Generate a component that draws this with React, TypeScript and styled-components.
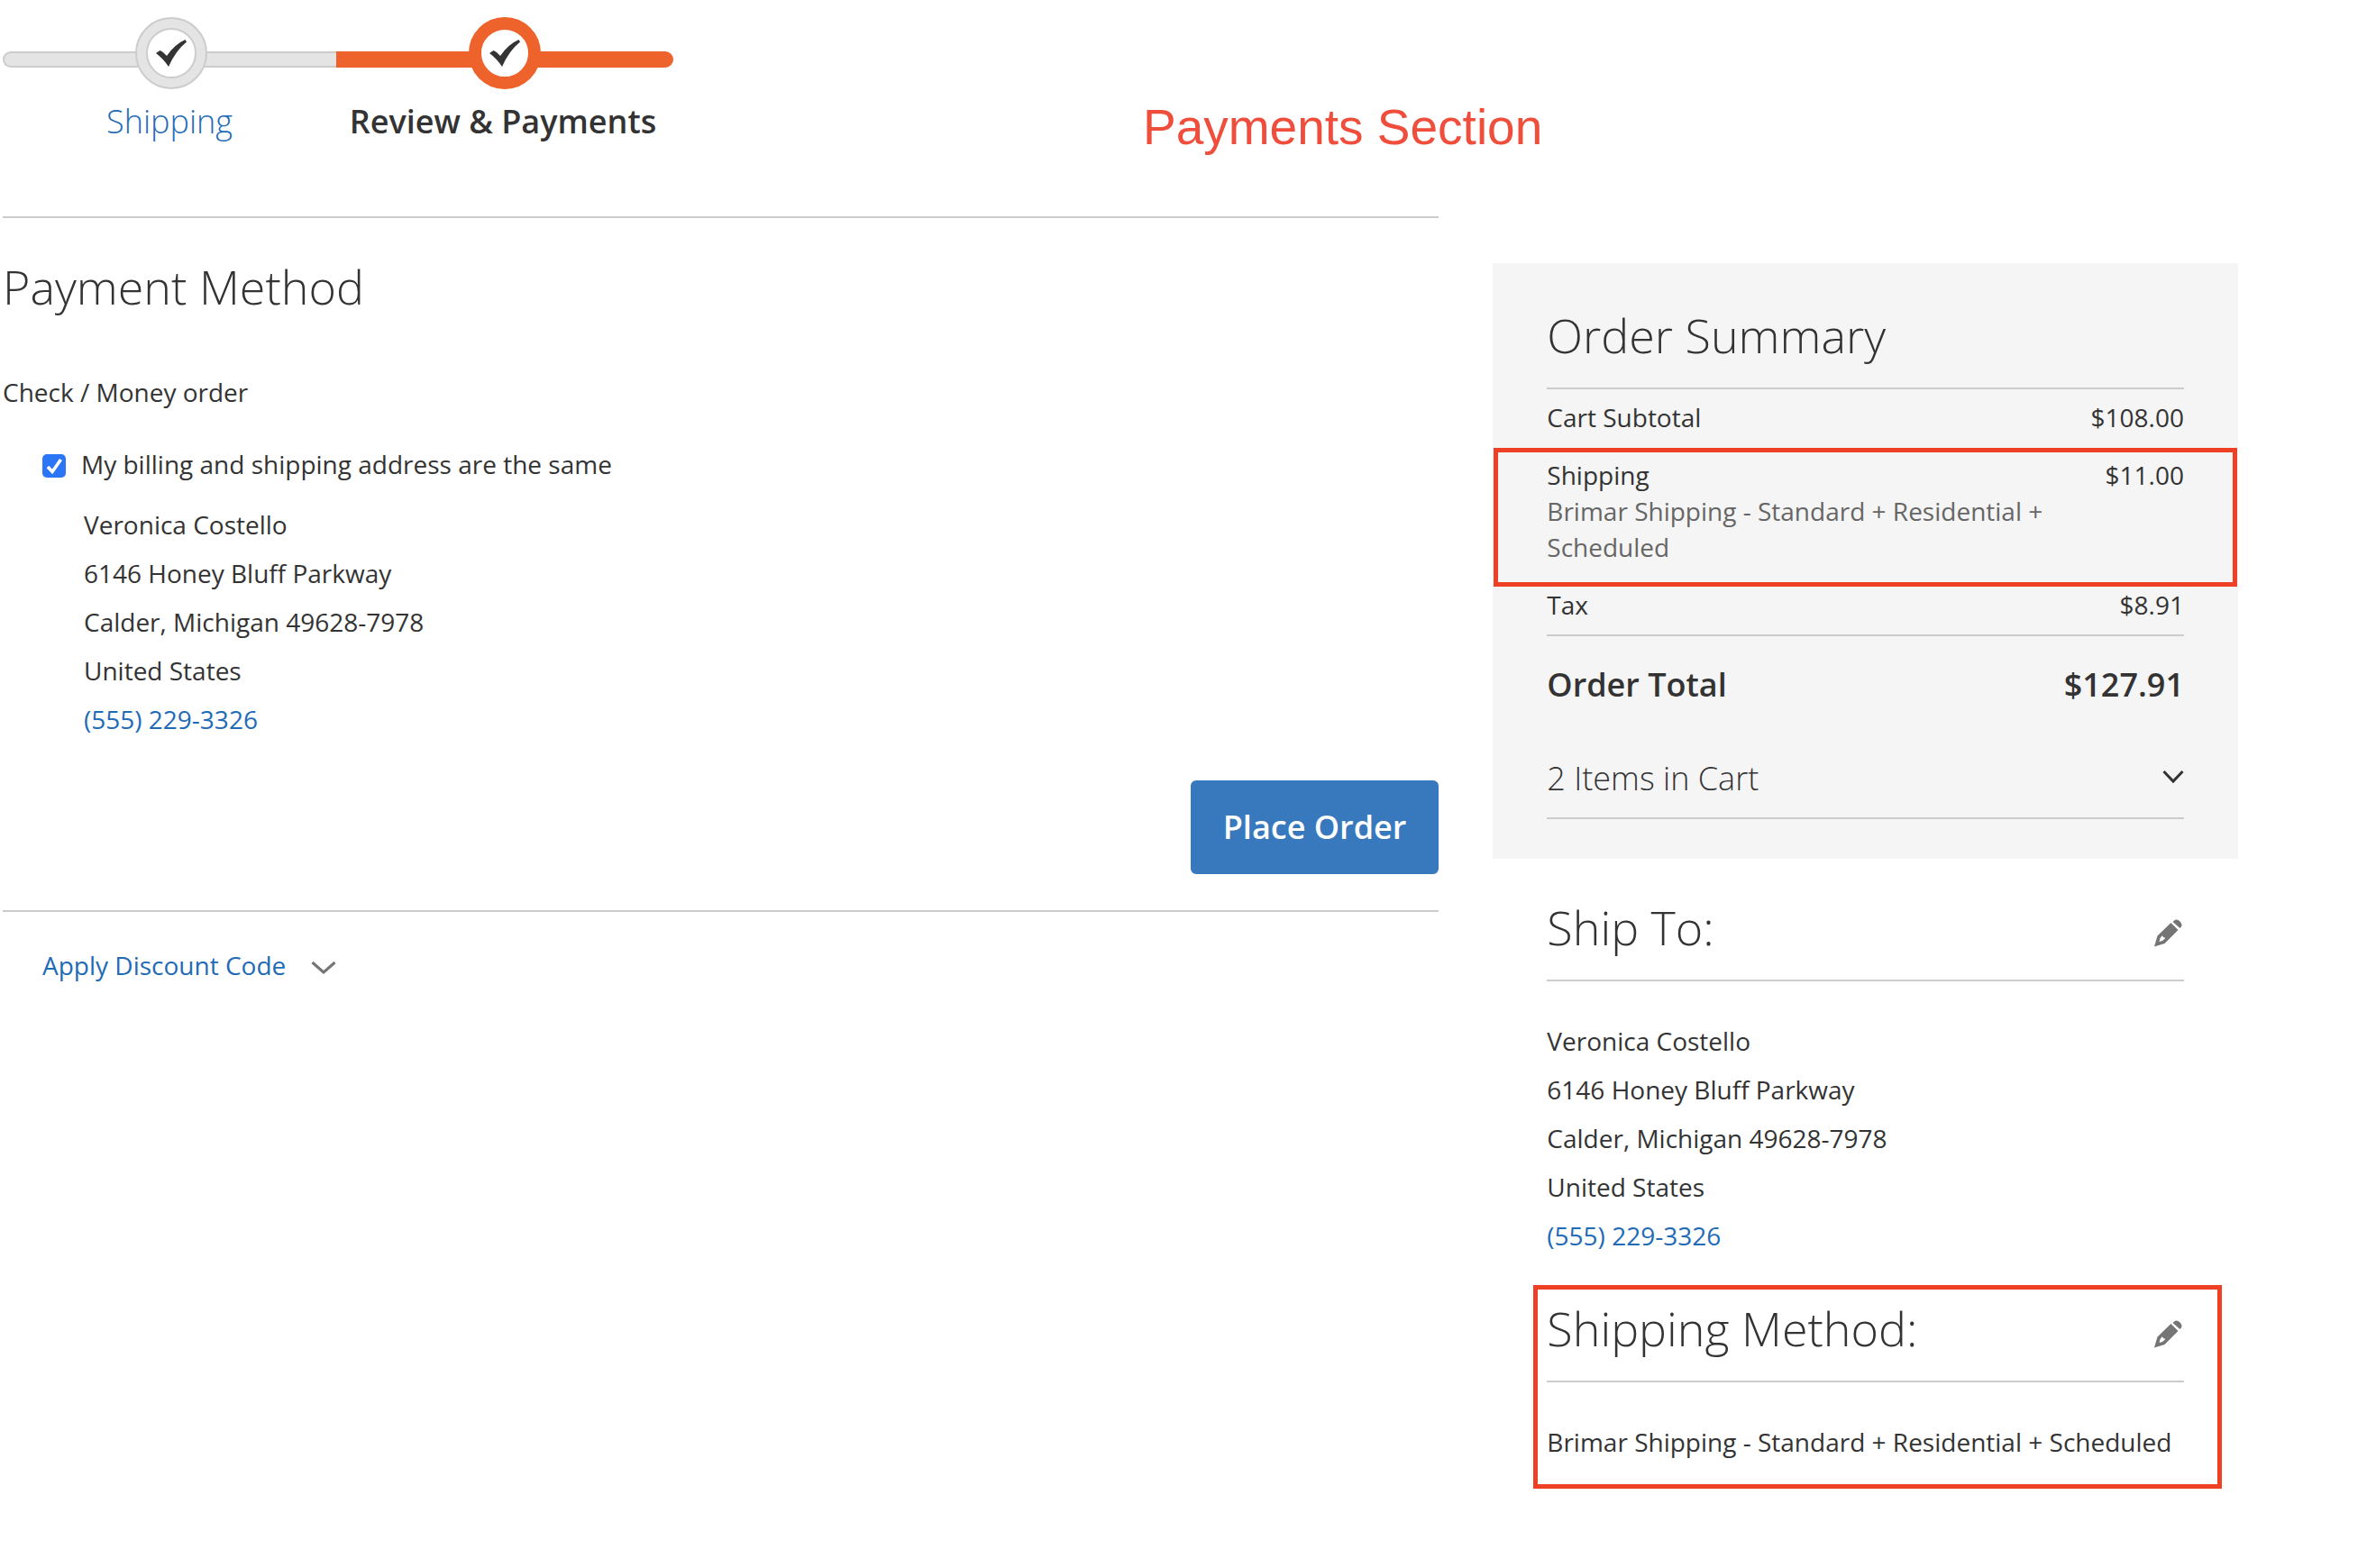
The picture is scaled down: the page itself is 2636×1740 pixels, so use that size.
import React from "react";
import styled, { createGlobalStyle } from "styled-components";

const text = "#333333";
const line = "#cccccc";
const link = "#1f6bb6";
const mark = "#ee4025";

const GlobalStyle = createGlobalStyle`
  *, *::before, *::after { box-sizing: border-box; }
  body {
    margin: 0;
    background: #ffffff;
    color: ${text};
    font-family: "Open Sans", "Noto Sans", sans-serif;
    font-size: 28px;
    line-height: 40px;
  }
  a { color: ${link}; text-decoration: none; }
`;

const Page = styled.div`
  padding: 0 153px 80px 3px;
`;

const Header = styled.header`
  display: flex;
  align-items: flex-start;
  height: 240px;
  padding-top: 19px;
`;

const Progress = styled.ol`
  display: flex;
  flex: none;
  margin: 0;
  padding: 0;
  list-style: none;
`;

const Step = styled.li<{ $active?: boolean }>`
  display: flex;
  flex-direction: column;
  align-items: center;
  position: relative;
  width: 370px;
  color: ${text};
  font-size: 36px;
  font-weight: ${(p) => (p.$active ? 600 : 300)};
  line-height: 50px;

  &::before {
    content: "";
    position: absolute;
    top: 38px;
    left: 0;
    right: ${(p) => (p.$active ? "-4px" : "0")};
    height: 18px;
    background: ${(p) => (p.$active ? "#ee622b" : "#e4e4e4")};
    border: 2px solid ${(p) => (p.$active ? "#ee622b" : line)};
    border-radius: ${(p) => (p.$active ? "0 10px 10px 0" : "10px 0 0 10px")};
    ${(p) => (p.$active ? "" : "border-right: 0;")}
  }
`;

const Dot = styled.span<{ $active?: boolean }>`
  display: grid;
  place-items: center;
  position: relative;
  width: 80px;
  height: 80px;
  margin: 0 0 11px 4px;
  border: 2px solid ${(p) => (p.$active ? "#ee622b" : line)};
  border-radius: 50%;
  background: ${(p) => (p.$active ? "#ee622b" : "#e4e4e4")};
`;

const DotCore = styled.span<{ $active?: boolean }>`
  display: grid;
  place-items: center;
  width: 56px;
  height: 56px;
  border: 2px solid ${(p) => (p.$active ? "#ee622b" : line)};
  border-radius: 50%;
  background: #ffffff;
`;

const Note = styled.p`
  margin: 90px 0 0 525px;
  color: #ef4e3c;
  font-family: "Liberation Sans", Arial, sans-serif;
  font-size: 55px;
  line-height: 64px;
  white-space: nowrap;
`;

const Columns = styled.div`
  display: grid;
  grid-template-columns: minmax(0, 2fr) minmax(0, 1fr);
  align-items: start;
`;

const Main = styled.main`
  margin-right: 60px;
  border-top: 2px solid ${line};
  padding-top: 48px;
`;

const Title = styled.h2`
  margin: 0;
  font-size: 52px;
  font-weight: 300;
  line-height: 56px;
`;

const MethodName = styled.p`
  margin: 69px 0 40px;
`;

const SameAddress = styled.label`
  display: flex;
  align-items: center;
  gap: 17px;
  padding-left: 44px;
`;

const Checkbox = styled.input`
  appearance: none;
  width: 26px;
  height: 26px;
  margin: 4px 0 0;
  border-radius: 5px;
  background: #ffffff;
  border: 2px solid #767676;

  &:checked {
    border: 0;
    background: #2b76f6
      url("data:image/svg+xml,%3Csvg xmlns='http://www.w3.org/2000/svg' viewBox='0 0 26 26'%3E%3Cpath d='M6 14l5 5.500L20.500 6' fill='none' stroke='white' stroke-width='3.600'/%3E%3C/svg%3E");
  }
`;

const Address = styled.address<{ $billing?: boolean }>`
  margin: ${(p) => (p.$billing ? "20px 0 41px" : "39px 0 0")};
  padding-left: ${(p) => (p.$billing ? 90 : 0)}px;
  font-style: normal;
  line-height: 54px;
`;

const Actions = styled.div`
  display: flex;
  justify-content: flex-end;
  padding-bottom: 40px;
  border-bottom: 2px solid ${line};
`;

const PlaceOrder = styled.button`
  padding: 28px 34px;
  border: 2px solid #3879bd;
  border-radius: 6px;
  background: #3879bd;
  color: #ffffff;
  font: 600 36px/44px "Open Sans", "Noto Sans", sans-serif;
`;

const Toggle = styled.button`
  display: flex;
  align-items: center;
  margin: 0;
  border: 0;
  background: none;
  font-family: inherit;
  text-align: left;
`;

const DiscountToggle = styled(Toggle)`
  gap: 28px;
  padding: 39px 0 0 44px;
  color: ${link};
  font-size: 28px;
  line-height: 40px;

  svg { margin-top: 6px; }
`;

const CartToggle = styled(Toggle)`
  justify-content: space-between;
  width: 100%;
  margin-top: 54px;
  padding: 0 0 18px;
  border-bottom: 2px solid ${line};
  color: ${text};
  font-size: 36px;
  font-weight: 300;
  line-height: 50px;

  svg { margin-bottom: 4px; }
`;

const Sidebar = styled.aside`
  padding-top: 52px;
`;

const Summary = styled.section`
  padding: 52px 60px 44px;
  background: #f5f5f5;
`;

const TitleRow = styled.div`
  display: flex;
  align-items: center;
  justify-content: space-between;
  padding-bottom: 30px;
  border-bottom: 2px solid ${line};
`;

const Totals = styled.table`
  width: 100%;
  border-collapse: collapse;
`;

const highlight = `
  content: "";
  position: absolute;
  border: 5px solid ${mark};
  pointer-events: none;
`;

const TotalRow = styled.tr<{ $marked?: boolean }>`
  position: relative;

  ${(p) =>
    p.$marked ? `&::after { ${highlight} top: 1px; bottom: -11px; left: -59px; right: -59px; }` : ""}

  th, td {
    padding: 11px 0 13px;
    font-weight: 400;
    text-align: left;
    vertical-align: top;
  }
  td {
    text-align: right;
    white-space: nowrap;
  }
`;

const GrandRow = styled.tr`
  border-top: 2px solid ${line};

  th, td {
    padding: 29px 0 0;
    font-size: 36px;
    font-weight: 600;
    line-height: 50px;
    text-align: left;
  }
  td { text-align: right; }
`;

const Carrier = styled.span`
  display: block;
  color: #666666;
`;

const ShipSection = styled.section<{ $marked?: boolean }>`
  position: relative;
  margin: 48px 60px 0;

  ${(p) =>
    p.$marked ? `&::after { ${highlight} top: -20px; bottom: -25px; left: -15px; right: -42px; }` : ""}
`;

const EditButton = styled.button`
  position: relative;
  z-index: 1;
  display: flex;
  padding: 12px 2px 0 0;
  border: 0;
  background: none;
`;

const MethodText = styled.p`
  margin: 39px 0 0;
  line-height: 54px;
`;

const Check = () => (
  <svg width="34" height="30" viewBox="0 0 34 30" aria-hidden="true">
    <path
      d="M0 15L4.500 12Q8.500 13.500 12 18Q21 5 32.500 0L34 2.500Q22 12 14 30Q8 21 0 15Z"
      fill={text}
    />
  </svg>
);

const Chevron = ({ width, color, stroke }: { width: number; color: string; stroke: number }) => (
  <svg width={width} height="16" viewBox={`0 0 ${width} 16`} aria-hidden="true">
    <path
      d={`M1.500 2L${width / 2} 13L${width - 1.5} 2`}
      fill="none"
      stroke={color}
      strokeWidth={stroke}
    />
  </svg>
);

const Pencil = () => (
  <svg width="31" height="31" viewBox="0 0 31 31" aria-hidden="true">
    <path
      fill="#757575"
      fillRule="evenodd"
      d="M0 30.500L3.500 18.500L18.500 4L26.500 12L11.500 27ZM5.500 25Q6 20.500 8.500 18.500Q9.500 18 10 20Q12.500 20 12 21.500Q10 24 5.500 25Z"
    />
    <path fill="#757575" d="M21.500 2Q25 -1 28.500 2.500Q32 6 29.500 9L28.500 10L20.500 3Z" />
  </svg>
);

const CustomerAddress = ({ billing }: { billing?: boolean }) => (
  <Address $billing={billing}>
    Veronica Costello
    <br />
    6146 Honey Bluff Parkway
    <br />
    Calder, Michigan 49628-7978
    <br />
    United States
    <br />
    <a href="tel:5552293326">(555) 229-3326</a>
  </Address>
);

export default function App() {
  return (
    <>
      <GlobalStyle />
      <Page>
        <Header>
          <Progress>
            <Step>
              <Dot>
                <DotCore>
                  <Check />
                </DotCore>
              </Dot>
              <a href="#shipping">Shipping</a>
            </Step>
            <Step $active>
              <Dot $active>
                <DotCore $active>
                  <Check />
                </DotCore>
              </Dot>
              <span>Review &amp; Payments</span>
            </Step>
          </Progress>
          <Note>Payments Section</Note>
        </Header>
        <Columns>
          <Main>
            <Title>Payment Method</Title>
            <MethodName>Check / Money order</MethodName>
            <SameAddress>
              <Checkbox type="checkbox" defaultChecked />
              <span>My billing and shipping address are the same</span>
            </SameAddress>
            <CustomerAddress billing />
            <Actions>
              <PlaceOrder type="button">Place Order</PlaceOrder>
            </Actions>
            <DiscountToggle type="button">
              Apply Discount Code
              <Chevron width={28} color="#757575" stroke={3} />
            </DiscountToggle>
          </Main>
          <Sidebar>
            <Summary>
              <TitleRow>
                <Title>Order Summary</Title>
              </TitleRow>
              <Totals>
                <tbody>
                  <TotalRow>
                    <th scope="row">Cart Subtotal</th>
                    <td>$108.00</td>
                  </TotalRow>
                  <TotalRow $marked>
                    <th scope="row">
                      Shipping
                      <Carrier>Brimar Shipping - Standard + Residential + Scheduled</Carrier>
                    </th>
                    <td>$11.00</td>
                  </TotalRow>
                  <TotalRow>
                    <th scope="row">Tax</th>
                    <td>$8.91</td>
                  </TotalRow>
                  <GrandRow>
                    <th scope="row">Order Total</th>
                    <td>$127.91</td>
                  </GrandRow>
                </tbody>
              </Totals>
              <CartToggle type="button">
                2 Items in Cart
                <Chevron width={24} color={text} stroke={3} />
              </CartToggle>
            </Summary>
            <ShipSection>
              <TitleRow>
                <Title>Ship To:</Title>
                <EditButton type="button" aria-label="Edit address">
                  <Pencil />
                </EditButton>
              </TitleRow>
              <CustomerAddress />
            </ShipSection>
            <ShipSection $marked>
              <TitleRow>
                <Title>Shipping Method:</Title>
                <EditButton type="button" aria-label="Edit shipping method">
                  <Pencil />
                </EditButton>
              </TitleRow>
              <MethodText>Brimar Shipping - Standard + Residential + Scheduled</MethodText>
            </ShipSection>
          </Sidebar>
        </Columns>
      </Page>
    </>
  );
}
